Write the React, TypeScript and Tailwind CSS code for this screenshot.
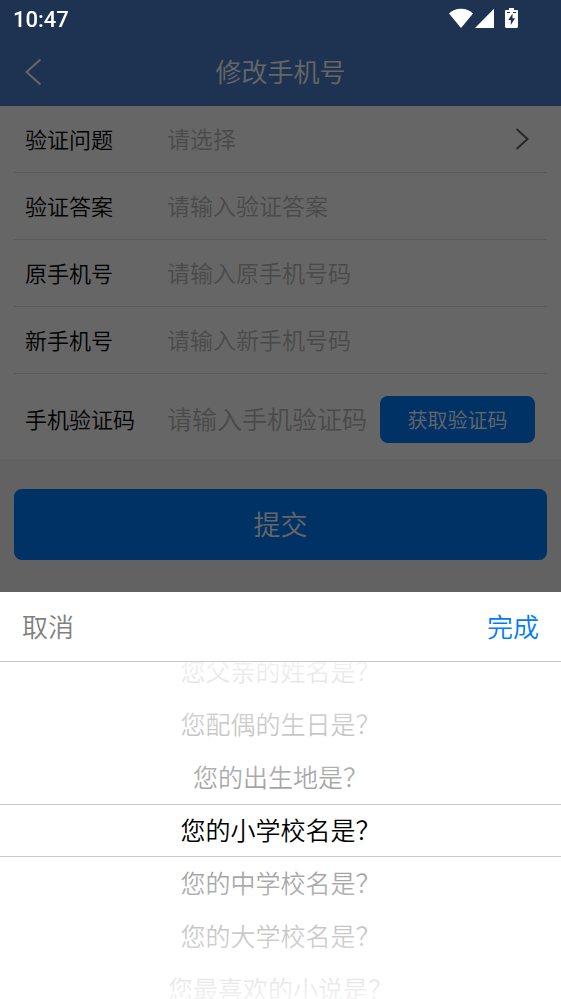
import { useState } from "react";
import clsx from "clsx";

const ITEM_HEIGHT = 53;

const questions = [
    "您父亲的姓名是？",
    "您配偶的生日是？",
    "您的出生地是？",
    "您的小学校名是？",
    "您的中学校名是？",
    "您的大学校名是？",
    "您最喜欢的小说是？",
];

const fields = [
    { id: "answer", label: "验证答案", placeholder: "请输入验证答案", type: "text" },
    { id: "old-phone", label: "原手机号", placeholder: "请输入原手机号码", type: "tel" },
    { id: "new-phone", label: "新手机号", placeholder: "请输入新手机号码", type: "tel" },
];

const rowClass = "flex h-[67px] items-center border-b border-[#e2e2e2] pl-[11px] pr-3";
const labelClass = "w-[142px] shrink-0 pb-[2px] text-[22px] text-black";
const inputClass = "min-w-0 flex-1 bg-transparent pb-[2px] outline-none placeholder:text-[#b9b9b9]";

function StatusBar() {
    return (
        <div className="fixed inset-x-0 top-0 z-20 flex h-9 items-center justify-between pl-[13px] pr-[43px] text-white">
            <span className="pt-[2px] font-[Roboto] text-[22px] font-medium">10:47</span>
            <div className="flex items-center">
                <svg className="h-5 w-6" viewBox="0 0 24 20" fill="currentColor" aria-hidden="true">
                    <path d="M12 20 0 5.600C3 2.500 7.200.8 12 .8s9 1.700 12 4.800z" />
                </svg>
                <svg className="ml-0.5 h-5 w-[19px]" viewBox="0 0 19 20" fill="currentColor" aria-hidden="true">
                    <path d="M19 .8V20H0z" />
                </svg>
                <svg className="ml-[11px] h-5 w-[13px]" viewBox="0 0 13 20" fill="currentColor" aria-hidden="true">
                    <path
                        fillRule="evenodd"
                        d="M4 0h5v2h2.800c.7 0 1.200.5 1.200 1.200v15.600c0 .7-.5 1.200-1.200 1.200H1.200C.5 20 0 19.500 0 18.800V3.200C0 2.500.5 2 1.200 2H4zM2 4v1h3V4zm6 0v1h3V4zM7.500 5.500 3.300 12h2.500v5l4.200-6.700H7.500z"
                    />
                </svg>
            </div>
        </div>
    );
}

interface QuestionPickerProps {
    selected: number;
    onSelect: (index: number) => void;
    onClose: () => void;
    onConfirm: () => void;
}

function QuestionPicker({ selected, onSelect, onClose, onConfirm }: QuestionPickerProps) {
    return (
        <div className="fixed inset-x-0 bottom-0 z-20 bg-white">
            <div className="flex h-[70px] items-center justify-between border-b border-[#c8c8c8] px-[22px] pb-[2px] text-[26px]">
                <button type="button" onClick={onClose} className="text-[#808080]">
                    取消
                </button>
                <button type="button" onClick={onConfirm} className="text-[#007aff]">
                    完成
                </button>
            </div>
            <div className="relative h-[337px] overflow-hidden">
                <div
                    className="flex flex-col pt-[142px]"
                    style={{ transform: `translateY(${-selected * ITEM_HEIGHT}px)` }}
                >
                    {questions.map((question, index) => (
                        <button
                            key={question}
                            type="button"
                            onClick={() => onSelect(index)}
                            className="h-[53px] shrink-0 pb-[2px] text-[25px] text-black"
                        >
                            {question}
                        </button>
                    ))}
                </div>
                {/* Fades above and below the selected row */}
                <div className="pointer-events-none absolute inset-0 flex flex-col">
                    <div className="flex-1 bg-linear-to-b from-white/95 to-white/60" />
                    <div className="h-[53px] border-y border-[#c8c8c8]" />
                    <div className="flex-1 bg-linear-to-t from-white/95 to-white/60" />
                </div>
            </div>
        </div>
    );
}

export default function App() {
    const [open, setOpen] = useState(true);
    const [selected, setSelected] = useState(3);
    const [question, setQuestion] = useState<string | null>(null);

    return (
        <div className="min-h-screen bg-[#f5f5f5] font-['Noto_Sans_CJK_SC',sans-serif] font-[350]">
            <StatusBar />

            <header className="bg-[#4b80cd] pt-[38px] text-white">
                <div className="grid h-[68px] grid-cols-[48px_1fr_48px] items-center">
                    <button type="button" aria-label="返回" className="flex justify-end pr-[6px]">
                        <svg className="h-7 w-[17px]" viewBox="0 0 17 28" fill="none" stroke="currentColor" strokeWidth="2">
                            <path d="M15.500 1.500 1.500 14l14 12.500" />
                        </svg>
                    </button>
                    <h1 className="pb-1 text-center text-[26px] font-[350]">修改手机号</h1>
                </div>
            </header>

            <form onSubmit={(e) => e.preventDefault()}>
                <div className="bg-white px-3.5">
                    <div className={rowClass}>
                        <span id="question-label" className={labelClass}>
                            验证问题
                        </span>
                        <button
                            type="button"
                            aria-labelledby="question-label"
                            onClick={() => setOpen(true)}
                            className="flex flex-1 items-center justify-between pr-[6px] text-[23px]"
                        >
                            <span className={clsx("pb-[2px]", question ? "text-black" : "text-[#b9b9b9]")}>
                                {question ?? "请选择"}
                            </span>
                            <svg className="h-[22px] w-[14px]" viewBox="0 0 14 22" fill="none" stroke="#666666" strokeWidth="2">
                                <path d="m1.500 1 11 10-11 10" />
                            </svg>
                        </button>
                    </div>

                    {fields.map((field) => (
                        <div key={field.id} className={rowClass}>
                            <label htmlFor={field.id} className={labelClass}>
                                {field.label}
                            </label>
                            <input
                                id={field.id}
                                type={field.type}
                                placeholder={field.placeholder}
                                className={clsx(inputClass, "text-[23px]")}
                            />
                        </div>
                    ))}

                    <div className="flex items-center pb-4 pl-[11px] pr-3 pt-[22px]">
                        <label htmlFor="code" className={labelClass}>
                            手机验证码
                        </label>
                        <input
                            id="code"
                            type="text"
                            placeholder="请输入手机验证码"
                            className={clsx(inputClass, "text-[25px]")}
                        />
                        <button
                            type="button"
                            className="ml-3 h-[47px] w-[155px] shrink-0 rounded-lg bg-[#007dff] text-[20px] text-white"
                        >
                            获取验证码
                        </button>
                    </div>
                </div>

                <div className="px-3.5 pt-[30px]">
                    <button type="submit" className="h-[71px] w-full rounded-lg bg-[#007dff] text-[27px] text-white">
                        提交
                    </button>
                </div>
            </form>

            {open && (
                <>
                    <div className="fixed inset-0 z-10 bg-black/60" onClick={() => setOpen(false)} />
                    <QuestionPicker
                        selected={selected}
                        onSelect={setSelected}
                        onClose={() => setOpen(false)}
                        onConfirm={() => {
                            setQuestion(questions[selected]);
                            setOpen(false);
                        }}
                    />
                </>
            )}
        </div>
    );
}
